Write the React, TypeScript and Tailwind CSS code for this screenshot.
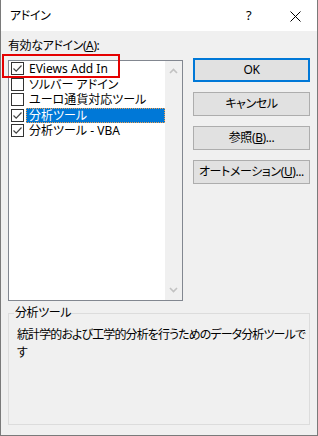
import React from "react";

const font = "[font-family:'Noto_Sans','Noto_Sans_CJK_JP',sans-serif] [font-feature-settings:'palt'] tracking-[-0.4px]";

const items = [
  { label: "EViews Add In", checked: true },
  { label: "ソルバー アドイン", checked: false },
  { label: "ユーロ通貨対応ツール", checked: false },
  { label: "分析ツール", checked: true, selected: true },
  { label: "分析ツール - VBA", checked: true },
];

function Check({ checked }: { checked: boolean }) {
  return (
    <div className="w-[13px] h-[13px] border border-[#333] bg-white flex items-center justify-center shrink-0">
      {checked && (
        <svg width="11" height="11" viewBox="0 0 11 11">
          <path d="M1.5 5.5 L4.2 8.2 L9.5 2.5" fill="none" stroke="#444" strokeWidth="1.2" />
        </svg>
      )}
    </div>
  );
}

function Btn({ children, primary }: { children: React.ReactNode; primary?: boolean }) {
  return (
    <div
      className={
        "h-[24px] flex items-center justify-center bg-[#e1e1e1] text-[12px] text-black " +
        (primary ? "border-2 border-[#0078d7]" : "border border-[#adadad]")
      }
    >
      {children}
    </div>
  );
}

export default function App() {
  return (
    <div className={`w-[318px] h-[436px] flex flex-col border-x border-b border-[#7a7a7a] bg-[#f0f0f0] text-black ${font}`}>
      {/* title bar */}
      <div className="h-[31px] bg-white flex items-center shrink-0 relative">
        <span className="pl-[9px] text-[12px]">アドイン</span>
        <span className="absolute left-[245px] top-[7px] text-[13px] leading-[16px]">?</span>
        <svg className="absolute left-[289px] top-[11px]" width="11" height="11" viewBox="0 0 11 11">
          <path d="M0.5 0.5 L10.5 10.5 M10.5 0.5 L0.5 10.5" stroke="#000" strokeWidth="1" />
        </svg>
      </div>

      <div className="flex-1 flex flex-col px-[7px] pt-[7px]">
        <div className="text-[12px] leading-[16px]">
          有効なアドイン(<span className="underline">A</span>):
        </div>

        <div className="flex mt-[6px] relative">
          {/* list box */}
          <div className="w-[175px] h-[241px] border border-[#828790] bg-white flex">
            <div className="flex-1 flex flex-col">
              {items.map((it) => (
                <div key={it.label} className="h-[15.5px] flex items-center text-[12px] leading-[15px] tracking-normal">
                  <div className="w-[17px] pl-[2px] flex items-center">
                    <Check checked={it.checked} />
                  </div>
                  <div
                    className={
                      "flex-1 h-full flex items-center pl-[2px] whitespace-nowrap " +
                      (it.selected ? "bg-[#0078d7] text-white border border-dotted border-[#f0a050]" : "border border-transparent")
                    }
                  >
                    {it.label}
                  </div>
                </div>
              ))}
            </div>
            <div className="w-[17px] bg-[#f0f0f0] flex flex-col justify-between items-center py-[7px]">
              <svg width="9" height="6" viewBox="0 0 9 6">
                <path d="M1 5 L4.5 1.5 L8 5" fill="none" stroke="#c2c2c2" strokeWidth="1.6" />
              </svg>
              <svg width="9" height="6" viewBox="0 0 9 6">
                <path d="M1 1 L4.5 4.5 L8 1" fill="none" stroke="#c2c2c2" strokeWidth="1.6" />
              </svg>
            </div>
          </div>

          {/* annotation */}
          <div className="absolute left-[-6px] top-[-6px] w-[118px] h-[24px] border-2 border-[#e50000]" />

          {/* buttons */}
          <div className="ml-[10px] w-[117px] flex flex-col gap-[10px] -mt-[2px]">
            <Btn primary>OK</Btn>
            <Btn>キャンセル</Btn>
            <Btn>
              参照(<span className="underline">B</span>)...
            </Btn>
            <Btn>
              オートメーション(<span className="underline">U</span>)...
            </Btn>
          </div>
        </div>

        {/* group box */}
        <div className="mt-[12px] h-[112px] border border-[#dcdcdc] relative">
          <span className="absolute left-[5px] top-[-9px] px-[1px] bg-[#f0f0f0] text-[12px] leading-[16px]">分析ツール</span>
          <div className="pt-[12px] pl-[8px] text-[12px] leading-[18px] whitespace-nowrap tracking-[-0.9px]">
            統計学的および工学的分析を行うためのデータ分析ツールで
            <br />す
          </div>
        </div>
      </div>
    </div>
  );
}
